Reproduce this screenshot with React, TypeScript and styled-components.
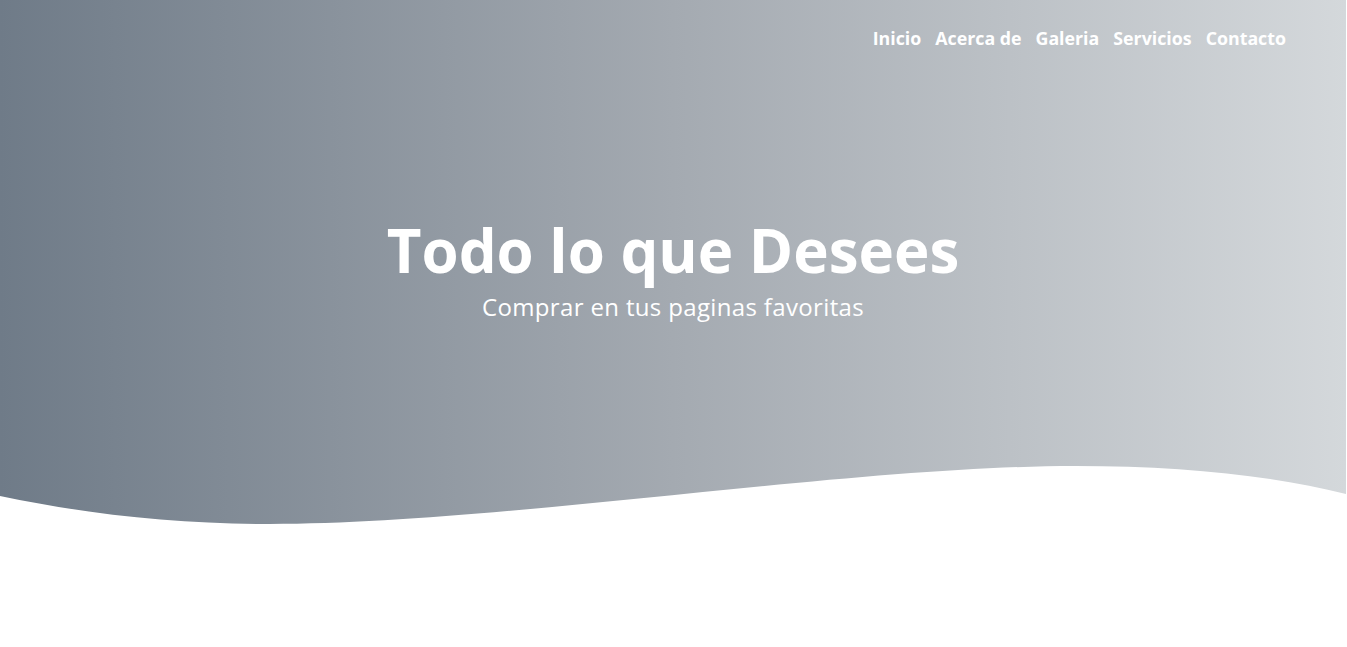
import React from "react";
import styled, { createGlobalStyle } from "styled-components";

const GlobalStyle = createGlobalStyle`
  html, body {
    margin: 0;
    padding: 0;
    background: #ffffff;
    font-family: "Open Sans", "Liberation Sans", sans-serif;
  }
`;

const Page = styled.div`
  min-height: 647px;
  background: #ffffff;
`;

const Hero = styled.header`
  display: flex;
  flex-direction: column;
  height: 560px;
  margin-right: 1px;
  background: linear-gradient(to right, #6f7b88 0%, #a4aab1 50%, #d4d8db 100%);
`;

const Nav = styled.nav`
  display: flex;
  justify-content: flex-end;
  gap: 14px;
  padding: 26px 60px 0 0;
`;

const NavLink = styled.a`
  color: #ffffff;
  font-size: 17.8px;
  font-weight: 700;
  line-height: 24px;
  text-decoration: none;
  cursor: pointer;
`;

const Content = styled.div`
  display: flex;
  flex-direction: column;
  align-items: center;
  padding-top: 162px;
  color: #ffffff;
  text-align: center;
`;

const Title = styled.h1`
  margin: 0;
  font-size: 60px;
  font-weight: 700;
  line-height: 76px;
`;

const Subtitle = styled.p`
  margin: 3px 0 0;
  font-size: 24px;
  font-weight: 400;
  letter-spacing: 0.35px;
  line-height: 31px;
`;

const Spacer = styled.div`
  flex: 1;
`;

const Wave = styled.svg`
  display: block;
  width: 100%;
  height: 100px;
`;

const links = ["Inicio", "Acerca de", "Galeria", "Servicios", "Contacto"];

export default function App() {
  return (
    <Page>
      <GlobalStyle />
      <Hero>
        <Nav>
          {links.map((l) => (
            <NavLink key={l}>{l}</NavLink>
          ))}
        </Nav>
        <Content>
          <Title>Todo lo que Desees</Title>
          <Subtitle>Comprar en tus paginas favoritas</Subtitle>
        </Content>
        <Spacer />
        <Wave viewBox="0 0 1346 100" preserveAspectRatio="none">
          <path
            d="M0 36 C90 55 180 64 270 64 C500 64 850 6 1075 6 C1180 6 1270 15 1346 34 L1346 100 L0 100 Z"
            fill="#ffffff"
          />
        </Wave>
      </Hero>
    </Page>
  );
}
